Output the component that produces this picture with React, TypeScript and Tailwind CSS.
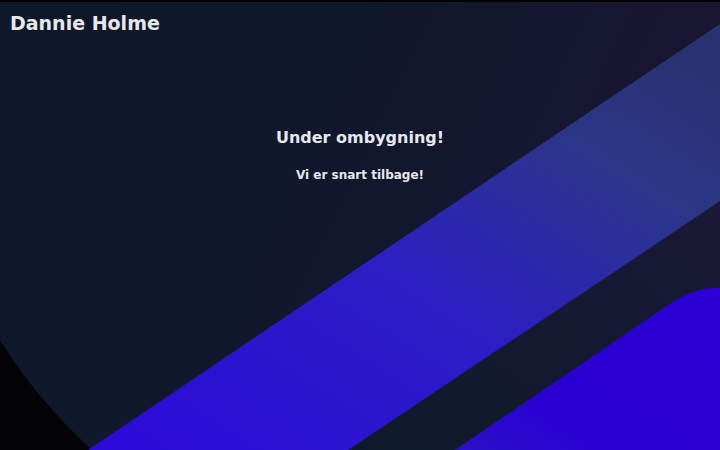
import React from 'react';

function Backdrop() {
  return (
    <svg
      className="absolute inset-0 h-full w-full"
      viewBox="0 0 720 450"
      preserveAspectRatio="none"
      aria-hidden="true"
    >
      <defs>
        <linearGradient id="bg" x1="0" y1="0.2" x2="1" y2="0.5">
          <stop offset="0" stopColor="#0f1829" />
          <stop offset="0.5" stopColor="#11182d" />
          <stop offset="1" stopColor="#1c1535" />
        </linearGradient>
        <linearGradient id="band" x1="0.1" y1="1" x2="0.95" y2="0.1">
          <stop offset="0" stopColor="#2c0bd8" />
          <stop offset="0.45" stopColor="#2c1ec4" />
          <stop offset="0.8" stopColor="#2b3688" />
          <stop offset="1" stopColor="#2a3372" />
        </linearGradient>
        <linearGradient id="slab" x1="0" y1="1" x2="1" y2="0">
          <stop offset="0" stopColor="#2a12c8" />
          <stop offset="0.3" stopColor="#2a00d2" />
          <stop offset="1" stopColor="#2a00d4" />
        </linearGradient>
        <linearGradient id="gap" x1="0" y1="1" x2="1" y2="0">
          <stop offset="0" stopColor="#0e1a2a" />
          <stop offset="1" stopColor="#1a1836" />
        </linearGradient>
      </defs>
      <rect width="720" height="450" fill="url(#bg)" />
      <path d="M0 340 A535 535 0 0 0 92 450 L0 450 Z" fill="#040306" />
      <polygon points="348,450 720,200 720,450" fill="url(#gap)" />
      <polygon points="88,450 720,22 720,200 348,450" fill="url(#band)" />
      <path d="M455 450 L670 303 Q696 286 720 287 L720 450 Z" fill="url(#slab)" />
    </svg>
  );
}

export default function App() {
  return (
    <div className="relative h-[450px] w-full overflow-hidden border-t-2 border-black font-['DejaVu_Sans',sans-serif] text-[#e8e8ec]">
      <Backdrop />
      <div className="relative flex flex-col">
        <header className="px-[10px] pt-[9px]">
          <h1 className="text-[19px] font-bold leading-6">Dannie Holme</h1>
        </header>
        <main className="mt-[91px] flex flex-col items-center">
          <h2 className="text-[16px] font-bold leading-6">Under ombygning!</h2>
          <p className="mt-[16px] text-[12px] font-bold">Vi er snart tilbage!</p>
        </main>
      </div>
    </div>
  );
}
